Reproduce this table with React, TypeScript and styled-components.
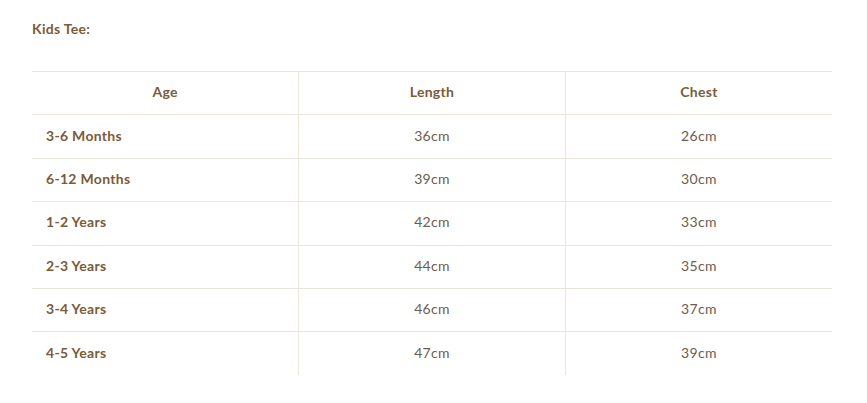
import React from "react";
import styled, { createGlobalStyle } from "styled-components";

const Global = createGlobalStyle`
  html, body { margin: 0; padding: 0; background: #ffffff; }
  body { font-family: Lato, "Noto Sans", sans-serif; }
`;

const Page = styled.div`
  padding: 20px 35px 0 32px;
`;

const Title = styled.h3`
  margin: 0;
  font-size: 14px;
  line-height: 17px;
  letter-spacing: 0.3px;
  font-weight: 700;
  color: #7b5b38;
`;

const Table = styled.table`
  margin-top: 34px;
  width: 800px;
  border-collapse: collapse;
  table-layout: fixed;
  border-top: 1px solid #ebe6da;
`;

const Row = styled.tr<{ $last?: boolean }>`
  height: 43.4px;
  border-bottom: ${(p) => (p.$last ? "none" : "1px solid #ebe6da")};
`;

const HeadCell = styled.th`
  font-size: 14px;
  letter-spacing: 0.3px;
  font-weight: 700;
  color: #7b5b38;
  text-align: center;
  padding: 0 14px 3px;
  & + & { border-left: 1px solid #ebe6da; }
`;

const Cell = styled.td<{ $label?: boolean }>`
  font-size: 14px;
  letter-spacing: 0.3px;
  font-weight: ${(p) => (p.$label ? 700 : 400)};
  color: ${(p) => (p.$label ? "#7b5b38" : "#6e5c4c")};
  text-align: ${(p) => (p.$label ? "left" : "center")};
  padding: 0 14px 3px;
  & + & { border-left: 1px solid #ebe6da; }
`;

const rows: [string, string, string][] = [
  ["3-6 Months", "36cm", "26cm"],
  ["6-12 Months", "39cm", "30cm"],
  ["1-2 Years", "42cm", "33cm"],
  ["2-3 Years", "44cm", "35cm"],
  ["3-4 Years", "46cm", "37cm"],
  ["4-5 Years", "47cm", "39cm"],
];

export default function App() {
  return (
    <Page>
      <Global />
      <Title>Kids Tee:</Title>
      <Table>
        <thead>
          <Row>
            <HeadCell>Age</HeadCell>
            <HeadCell>Length</HeadCell>
            <HeadCell>Chest</HeadCell>
          </Row>
        </thead>
        <tbody>
          {rows.map((r, i) => (
            <Row key={r[0]} $last={i === rows.length - 1}>
              <Cell $label>{r[0]}</Cell>
              <Cell>{r[1]}</Cell>
              <Cell>{r[2]}</Cell>
            </Row>
          ))}
        </tbody>
      </Table>
    </Page>
  );
}
